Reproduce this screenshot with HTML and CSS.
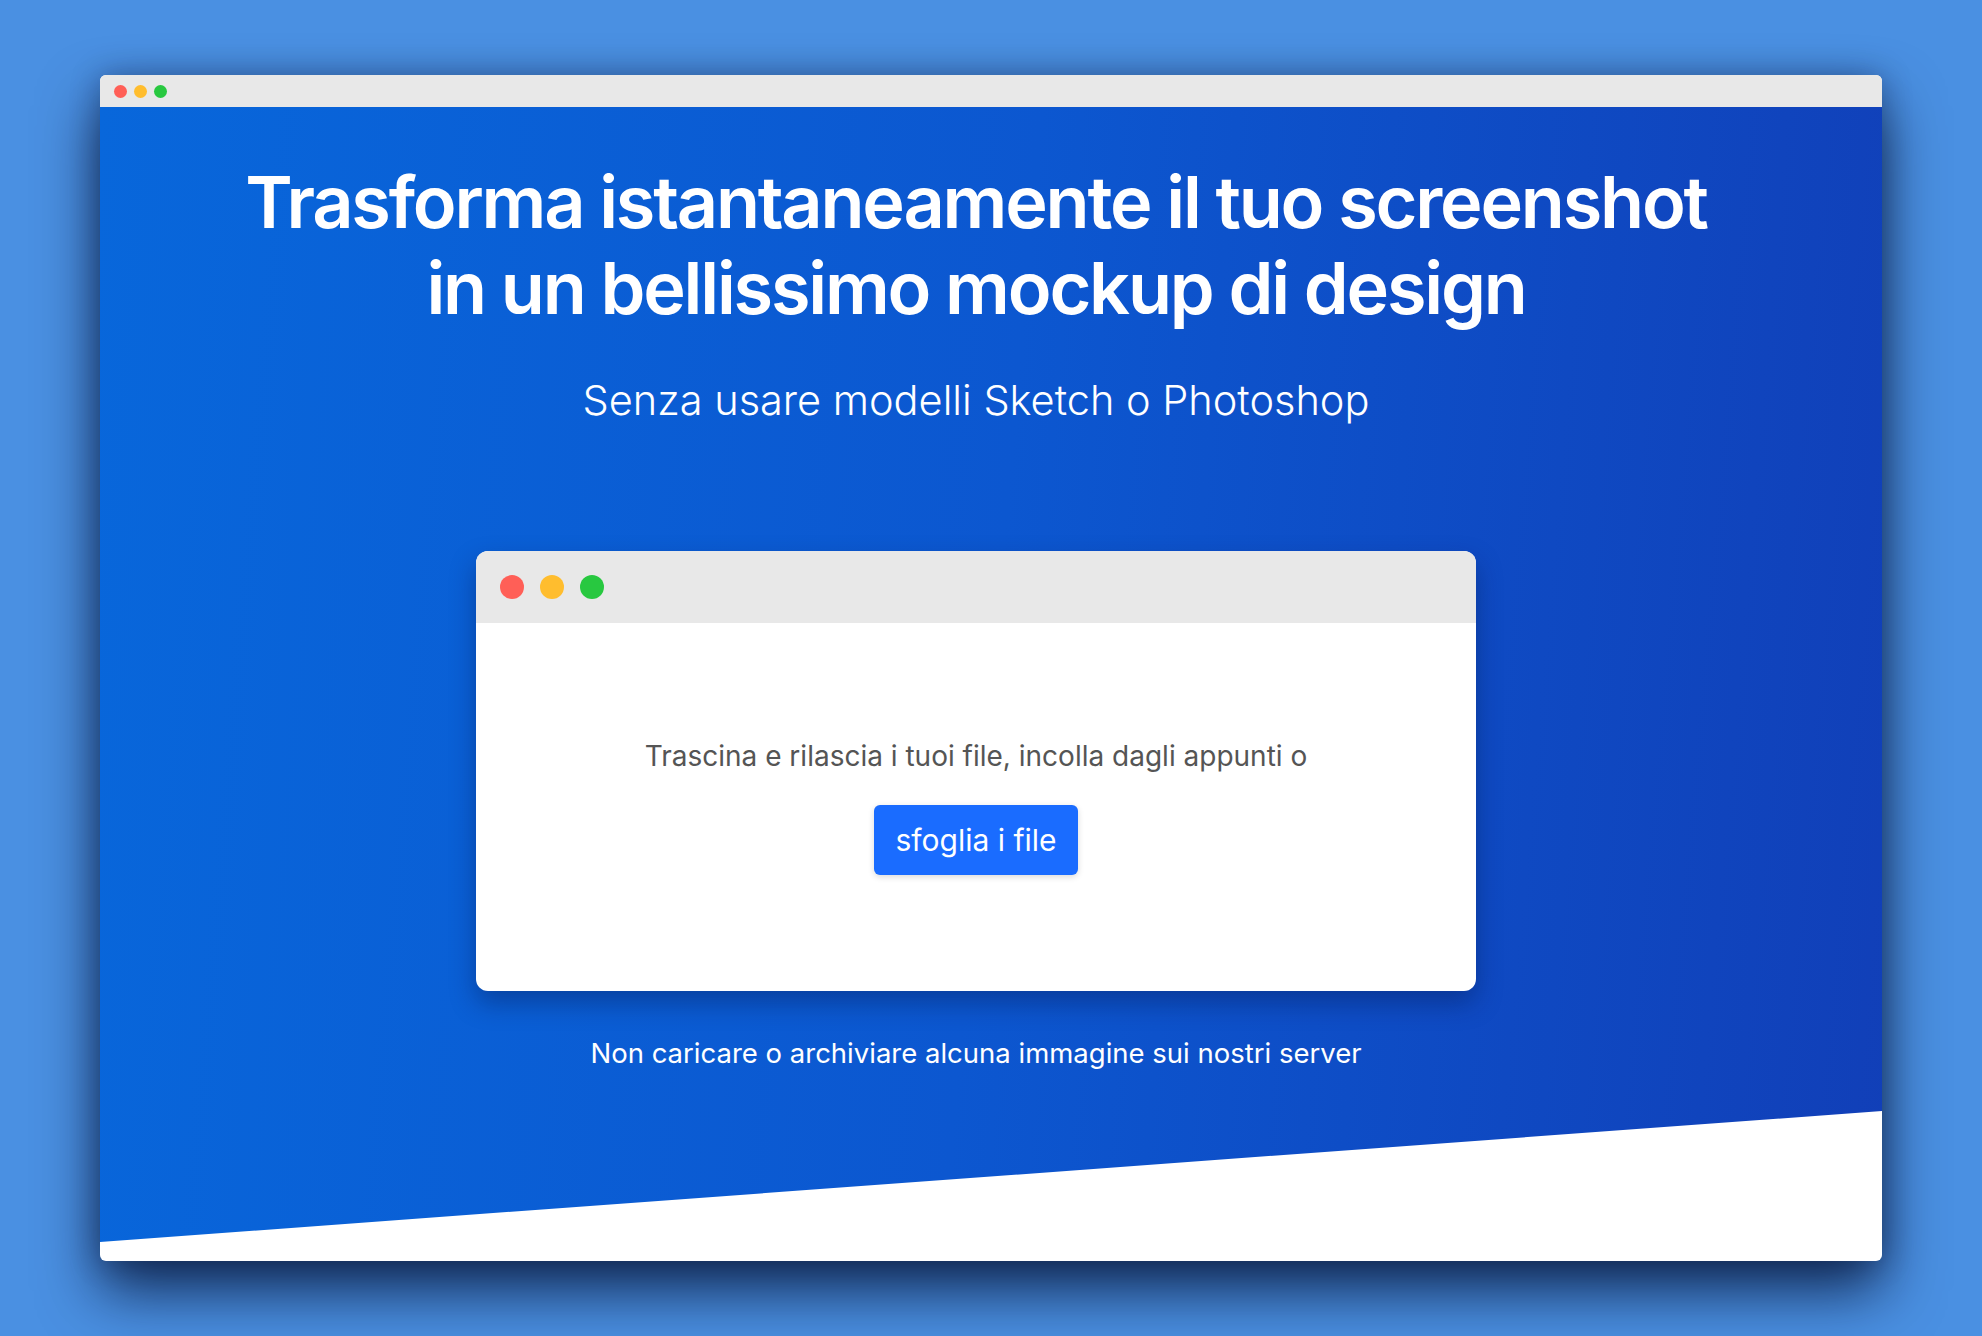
FILE: index.html
```html
<!DOCTYPE html>
<html lang="it">
<head>
    <meta charset="UTF-8">
    <meta name="viewport" content="width=device-width, initial-scale=1.0">
    <title>Mockup</title>
    <link rel="stylesheet" href="styles.css">
</head>
<body>
    <div class="window">
        <div class="window-bar">
            <span class="dot dot-red"></span>
            <span class="dot dot-yellow"></span>
            <span class="dot dot-green"></span>
        </div>
        <section class="hero">
            <h1 class="hero-title">Trasforma istantaneamente il tuo screenshot<br>in un bellissimo mockup di design</h1>
            <p class="hero-subtitle">Senza usare modelli Sketch o Photoshop</p>
            <div class="dropzone">
                <div class="dropzone-bar">
                    <span class="dot dot-big dot-red"></span>
                    <span class="dot dot-big dot-yellow"></span>
                    <span class="dot dot-big dot-green"></span>
                </div>
                <div class="dropzone-body">
                    <p class="dropzone-text">Trascina e rilascia i tuoi file, incolla dagli appunti o</p>
                    <button class="browse-button">sfoglia i file</button>
                </div>
            </div>
            <p class="hero-note">Non caricare o archiviare alcuna immagine sui nostri server</p>
        </section>
    </div>
</body>
</html>
```

FILE: styles.css
```css
body, html {
    margin: 0;
    background-color: #4a90e2;
    font-family: Inter, "Noto Sans", sans-serif;
}
body {
    min-height: 100vh;
    box-sizing: border-box;
    padding: 75px 0 0 100px;
}
.window {
    width: 1782px;
    height: 1186px;
    display: flex;
    flex-direction: column;
    background-color: #fff;
    border-radius: 6px;
    overflow: hidden;
    box-shadow: 0 30px 60px rgba(0, 10, 40, 0.75), 0 0 30px rgba(0, 10, 40, 0.3);
}
.window-bar {
    height: 32px;
    flex-shrink: 0;
    display: flex;
    align-items: center;
    gap: 7px;
    padding-left: 14px;
    background-color: #e8e8e8;
}
.dot {
    width: 13px;
    height: 13px;
    border-radius: 50%;
}
.dot-big {
    width: 24px;
    height: 24px;
}
.dot-red {
    background-color: #ff5f57;
}
.dot-yellow {
    background-color: #ffbd2e;
}
.dot-green {
    background-color: #28c840;
}
.hero {
    flex: 1;
    display: flex;
    flex-direction: column;
    align-items: center;
    padding: 52px 30px 0 0;
    background: linear-gradient(95deg, #0867db 0%, #0c57d0 50%, #113fb8 100%);
    clip-path: polygon(0 0, 100% 0, 100% calc(100% - 150px), 0 calc(100% - 19px));
    color: #fff;
}
.hero-title {
    margin: 0;
    font-size: 72px;
    line-height: 86px;
    font-weight: 600;
    letter-spacing: -2.2px;
    text-align: center;
}
.hero-subtitle {
    margin: 45px 0 0;
    font-size: 41.5px;
    line-height: 48px;
    font-weight: 300;
}
.dropzone {
    width: 1000px;
    height: 440px;
    margin-top: 127px;
    display: flex;
    flex-direction: column;
    background-color: #fff;
    border-radius: 12px;
    overflow: hidden;
    box-shadow: 0 12px 26px rgba(5, 25, 80, 0.4);
}
.dropzone-bar {
    height: 72px;
    flex-shrink: 0;
    display: flex;
    align-items: center;
    gap: 16px;
    padding-left: 24px;
    background-color: #e8e8e8;
}
.dropzone-body {
    flex: 1;
    display: flex;
    flex-direction: column;
    align-items: center;
    justify-content: center;
    gap: 32px;
}
.dropzone-text {
    margin: 0;
    font-size: 28px;
    line-height: 34px;
    color: #555;
}
.browse-button {
    width: 204px;
    height: 70px;
    border: none;
    border-radius: 6px;
    background-color: #1a6cff;
    color: #fff;
    font-family: Inter, "Noto Sans", sans-serif;
    font-size: 30px;
    font-weight: 400;
    box-shadow: 0 2px 6px rgba(0, 0, 0, 0.15);
    cursor: pointer;
}
.hero-note {
    margin: 46px 0 0;
    font-size: 27.5px;
    line-height: 32px;
}
```
